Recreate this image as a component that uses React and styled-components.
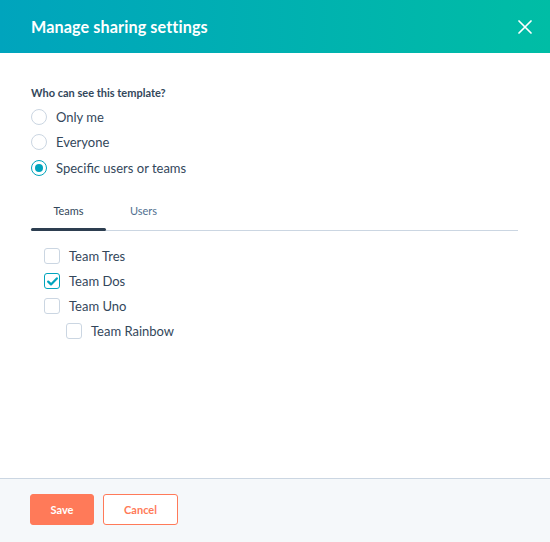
import React, { useState } from "react";
import styled, { createGlobalStyle } from "styled-components";

const Global = createGlobalStyle`
  html, body { margin: 0; padding: 0; background: #fff; }
  body { font-family: Lato, "Open Sans", sans-serif; color: #33475b; }
  * { box-sizing: border-box; }
`;

const Dialog = styled.div`
  width: 550px;
  height: 542px;
  display: flex;
  flex-direction: column;
  background: #fff;
`;

const Header = styled.header`
  height: 53px;
  flex: none;
  display: flex;
  align-items: center;
  justify-content: space-between;
  padding: 0 18px 0 31px;
  background: linear-gradient(90deg, #00a4bd 0%, #00bda5 100%);
`;

const Title = styled.h1`
  margin: 0;
  font-size: 16.2px;
  font-weight: 700;
  color: #fff;
  letter-spacing: 0.1px;
`;

const Close = styled.button`
  border: 0;
  background: none;
  padding: 0;
  width: 14px;
  height: 14px;
  display: flex;
  cursor: pointer;
`;

const Body = styled.main`
  flex: 1;
  padding: 33px 31px 0 31px;
`;

const Label = styled.div`
  font-size: 11px;
  font-weight: 700;
  color: #33475b;
  margin-bottom: 5px;
`;

const RadioList = styled.div`
  display: flex;
  flex-direction: column;
`;

const RadioRow = styled.label`
  height: 25.5px;
  display: flex;
  align-items: center;
  gap: 9px;
  font-size: 13px;
  color: #33475b;
  cursor: pointer;
`;

const RadioCircle = styled.span`
  width: 16px;
  height: 16px;
  border-radius: 50%;
  border: 1px solid ${(p) => (p.$on ? "#00a4bd" : "#cbd6e2")};
  background: #fff;
  display: flex;
  align-items: center;
  justify-content: center;
  flex: none;
  &::after {
    content: "";
    width: 8px;
    height: 8px;
    border-radius: 50%;
    background: ${(p) => (p.$on ? "#00a4bd" : "transparent")};
  }
`;

const Tabs = styled.div`
  margin-top: 19px;
  display: flex;
  border-bottom: 1px solid #cbd6e2;
  width: 487px;
`;

const Tab = styled.button`
  border: 0;
  background: none;
  font-family: inherit;
  width: 75px;
  height: 31px;
  padding: 0 0 9px;
  font-size: 11px;
  color: ${(p) => (p.$active ? "#33475b" : "#516f90")};
  position: relative;
  margin-bottom: -1px;
  cursor: pointer;
  &::after {
    content: "";
    position: absolute;
    left: 0;
    right: 0;
    bottom: 0;
    height: 3px;
    border-radius: 2px;
    background: ${(p) => (p.$active ? "#2d3e50" : "transparent")};
  }
`;

const CheckList = styled.div`
  margin-top: 13px;
  padding-left: 13px;
  display: flex;
  flex-direction: column;
`;

const CheckRow = styled.label`
  height: 25px;
  display: flex;
  align-items: center;
  gap: 9px;
  padding-left: ${(p) => p.$indent * 22}px;
  font-size: 13px;
  color: #33475b;
  cursor: pointer;
`;

const Box = styled.span`
  width: 16px;
  height: 16px;
  border-radius: 3px;
  border: 1px solid ${(p) => (p.$on ? "#00a4bd" : "#cbd6e2")};
  background: #fff;
  display: flex;
  align-items: center;
  justify-content: center;
  flex: none;
`;

const Footer = styled.footer`
  height: 64px;
  flex: none;
  background: #f5f8fa;
  border-top: 1px solid #cbd6e2;
  display: flex;
  align-items: center;
  gap: 9px;
  padding: 0 30px 2px;
`;

const Button = styled.button`
  height: 31px;
  padding: 0;
  width: ${(p) => p.$w}px;
  border-radius: 3px;
  font-family: inherit;
  font-size: 11px;
  font-weight: 700;
  border: 1px solid #ff7a59;
  background: ${(p) => (p.$primary ? "#ff7a59" : "#fff")};
  color: ${(p) => (p.$primary ? "#fff" : "#ff7a59")};
  cursor: pointer;
`;

const radios = ["Only me", "Everyone", "Specific users or teams"];
const teams = [
  { name: "Team Tres", indent: 0, on: false },
  { name: "Team Dos", indent: 0, on: true },
  { name: "Team Uno", indent: 0, on: false },
  { name: "Team Rainbow", indent: 1, on: false },
];

export default function App() {
  const [sel] = useState(2);
  return (
    <Dialog>
      <Global />
      <Header>
        <Title>Manage sharing settings</Title>
        <Close aria-label="Close">
          <svg width="14" height="14" viewBox="0 0 14 14">
            <path d="M1 1 L13 13 M13 1 L1 13" stroke="#fff" strokeWidth="1.7" strokeLinecap="round" />
          </svg>
        </Close>
      </Header>
      <Body>
        <Label>Who can see this template?</Label>
        <RadioList>
          {radios.map((r, i) => (
            <RadioRow key={r}>
              <RadioCircle $on={i === sel} />
              {r}
            </RadioRow>
          ))}
        </RadioList>
        <Tabs>
          <Tab $active>Teams</Tab>
          <Tab>Users</Tab>
        </Tabs>
        <CheckList>
          {teams.map((t) => (
            <CheckRow key={t.name} $indent={t.indent}>
              <Box $on={t.on}>
                {t.on && (
                  <svg width="11" height="9" viewBox="0 0 11 9">
                    <path d="M1.2 4.6 L4 7.4 L9.8 1.4" fill="none" stroke="#00a4bd" strokeWidth="2.2" strokeLinecap="round" strokeLinejoin="round" />
                  </svg>
                )}
              </Box>
              {t.name}
            </CheckRow>
          ))}
        </CheckList>
      </Body>
      <Footer>
        <Button $primary $w={64}>Save</Button>
        <Button $w={75}>Cancel</Button>
      </Footer>
    </Dialog>
  );
}
